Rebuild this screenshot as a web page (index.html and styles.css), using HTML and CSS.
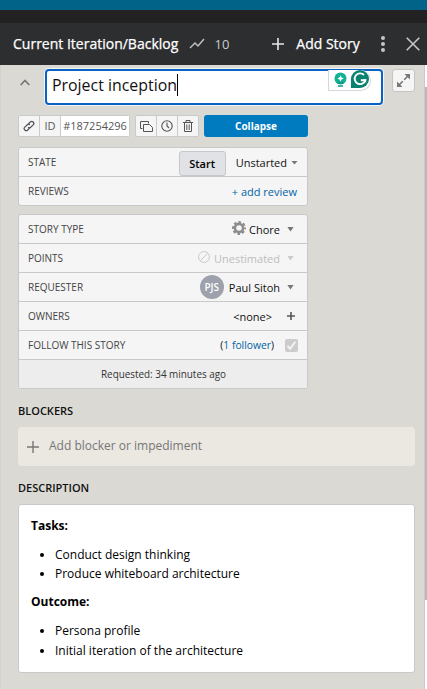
FILE: index.html
```html
<!DOCTYPE html>
<html lang="en">
<head>
<meta charset="utf-8">
<title>Current Iteration/Backlog</title>
<link rel="stylesheet" href="styles.css">
</head>
<body>
<div class="app">
  <div class="topbar"></div>
  <div class="strip"></div>
  <header class="panel-header">
    <h1>Current Iteration/Backlog</h1>
    <svg class="trend" width="16" height="12" viewBox="0 0 16 12"><path d="M1 10 6 5l3 3 6-7" fill="none" stroke="#c4c4c4" stroke-width="1.4"/></svg>
    <span class="count">10</span>
    <button class="add"><svg width="12" height="12" viewBox="0 0 12 12"><path d="M6 0v12M0 6h12" stroke="#e8e8e8" stroke-width="1.6"/></svg><span>Add Story</span></button>
    <svg class="dots" width="6" height="18" viewBox="0 0 6 18"><g fill="#c6c6c6"><circle cx="3" cy="3" r="2"/><circle cx="3" cy="9" r="2"/><circle cx="3" cy="15" r="2"/></g></svg>
    <svg class="close" width="14" height="14" viewBox="0 0 14 14"><path d="m.7.7 12.6 12.6M13.3.7.7 13.3" stroke="#c6c6c6" stroke-width="1.6"/></svg>
  </header>
  <main class="body">
    <section class="story">
      <div class="title-row">
        <svg class="chev" width="10" height="7" viewBox="0 0 10 7"><path d="m.7 6 4.3-4.5L9.300 6" fill="none" stroke="#777" stroke-width="1.7"/></svg>
        <div class="title-input"><span>Project inception</span><i class="caret"></i>
          <div class="assist">
            <svg width="13" height="16" viewBox="0 0 13 16"><circle cx="6.500" cy="6.500" r="6" fill="#12b195"/><path d="M3.500 10h6v2h-6zM4 13.200h5v1.600H4z" fill="#0a9c83"/><path d="M6.500 3.200 7.500 5.500l2.300 1-2.300 1-1 2.300-1-2.300-2.300-1 2.300-1z" fill="#fff"/></svg>
            <svg width="18" height="18" viewBox="0 0 18 18"><path d="M0 18V9a9 9 0 1 1 9 9z" fill="#0a8270"/><path d="M13 5A5.400 5.400 0 1 0 14.300 10.200H9.800" fill="none" stroke="#fff" stroke-width="1.900"/><path d="M11.800 9.300h3.300v3.500z" fill="#fff"/></svg>
          </div>
        </div>
        <button class="expand"><svg width="13" height="13" viewBox="0 0 13 13"><path d="M7.500 0H13v5.500zM0 7.500V13h5.500z" fill="#777"/><path d="m11 2-3.800 3.800M5.800 7.200 2 11" stroke="#777" stroke-width="1.600"/></svg></button>
      </div>
      <div class="actions">
        <div class="group">
          <span class="cell link"><svg width="12" height="12" viewBox="0 0 12 12" fill="none" stroke="#555" stroke-width="1.200"><path d="M4.500 4.800 7.300 2a2 2 0 0 1 2.900 2.900L7.700 7.300a2 2 0 0 1-2.600 0"/><path d="M7.500 7.200 4.700 10a2 2 0 0 1-2.900-2.900l2.500-2.400a2 2 0 0 1 2.600 0"/></svg></span>
          <span class="cell id">ID</span>
          <span class="cell num">#187254296</span>
        </div>
        <div class="group icons">
          <span class="cell"><svg width="13" height="11" viewBox="0 0 13 11" fill="none" stroke="#555" stroke-width="1"><path d="M2.500 7.500h-2v-7h8v2"/><path d="M3.500 3.500h6l3 3v4h-9z"/></svg></span>
          <span class="cell"><svg width="12" height="12" viewBox="0 0 12 12" fill="none" stroke="#555" stroke-width="1.100"><circle cx="6" cy="6" r="5.200"/><path d="M6 2.500V6l2 2"/></svg></span>
          <span class="cell"><svg width="10" height="12" viewBox="0 0 10 12" fill="none" stroke="#555" stroke-width="1"><path d="M0 2.500h10M3 2V.5h4V2M1.500 2.500v9h7v-9M3.800 4.500v5.500M6.200 4.500v5.500"/></svg></span>
        </div>
        <button class="collapse">Collapse</button>
      </div>
      <div class="card state">
        <div class="row"><span class="label">STATE</span><button class="start">Start</button><span class="value">Unstarted</span><i class="tri small"></i></div>
        <div class="row"><span class="label">REVIEWS</span><a class="review">+ add review</a></div>
      </div>
      <div class="card">
        <div class="row"><span class="label">STORY TYPE</span><svg class="gear" width="14" height="14" viewBox="-7 -7 14 14"><circle r="4.100" fill="none" stroke="#8c8c8c" stroke-width="2.600"/><circle r="6" fill="none" stroke="#8c8c8c" stroke-width="2" stroke-dasharray="2.700 2.012" stroke-dashoffset="1.350"/></svg><span class="value">Chore</span><i class="tri"></i></div>
        <div class="row muted"><span class="label">POINTS</span><svg class="none" width="12" height="12" viewBox="0 0 12 12" fill="none" stroke="#c9c9c9"><circle cx="6" cy="6" r="5.400"/><path d="m2.300 9.700 7.400-7.400"/></svg><span class="value">Unestimated</span><i class="tri"></i></div>
        <div class="row"><span class="label">REQUESTER</span><span class="avatar">PJS</span><span class="value">Paul Sitoh</span><i class="tri"></i></div>
        <div class="row"><span class="label">OWNERS</span><span class="value owner">&lt;none&gt;</span><svg class="plus" width="8" height="8" viewBox="0 0 8 8"><path d="M4 0v8M0 4h8" stroke="#555" stroke-width="1.600"/></svg></div>
        <div class="row"><span class="label">FOLLOW THIS STORY</span><span class="follow">(<a>1 follower</a>)</span><span class="check"><svg width="13" height="13" viewBox="0 0 13 13"><path d="m2.500 7 2.600 2.700 5.200-7" fill="none" stroke="#f5f5f5" stroke-width="1.900"/></svg></span></div>
        <div class="row requested">Requested: 34 minutes ago</div>
      </div>
      <h2 class="blockers-title">BLOCKERS</h2>
      <div class="blocker"><svg width="12" height="12" viewBox="0 0 12 12"><path d="M6 0v12M0 6h12" stroke="#777" stroke-width="1.400"/></svg><span>Add blocker or impediment</span></div>
      <h2 class="desc-title">DESCRIPTION</h2>
      <div class="description">
        <p>Tasks:</p>
        <ul><li>Conduct design thinking</li><li>Produce whiteboard architecture</li></ul>
        <p>Outcome:</p>
        <ul class="last"><li>Persona profile</li><li>Initial iteration of the architecture</li></ul>
      </div>
    </section>
    <div class="scrollbar"><div class="thumb"></div></div>
  </main>
</div>
</body>
</html>
```
FILE: styles.css
```css
* { box-sizing: border-box; }
body { margin: 0; font-family: "Open Sans", "Noto Sans", sans-serif; font-size: 12px; color: #111; }
button { font: inherit; margin: 0; padding: 0; border: 0; }
svg { display: block; flex: none; }
.app { width: 427px; height: 689px; overflow: hidden; display: flex; flex-direction: column; background: #dad9d4; }
.topbar { height: 10px; background: #006387; flex: none; }
.strip { height: 13px; background: #222; flex: none; }
.panel-header { height: 42px; flex: none; background: #2d2e30; display: flex; align-items: center; padding: 0 7px 0 13px; color: #fff; white-space: nowrap; }
.panel-header h1 { margin: 0 0 1px; width: 177px; font-size: 14px; font-weight: 400; -webkit-text-stroke: .25px #fff; }
.count { margin: 0 0 1px 9px; width: 58px; font-size: 13px; color: #ccc; }
.add { display: flex; align-items: center; gap: 12px; width: 108px; background: none; color: #fff; font-size: 14px; -webkit-text-stroke: .25px #fff; }
.add span { margin-bottom: 1px; }
.close { margin-left: 20px; }
.body { flex: 1; min-height: 0; display: flex; }
.story { width: 425px; flex: none; padding: 4px 8px 0 17px; border-left: 1px solid #d3d2cd; border-right: 1px solid #c9c9c5; }
.scrollbar { flex: 1; background: #fff; padding-top: 22px; }
.thumb { height: 513px; background: #b9b9b9; }
.title-row { display: flex; align-items: flex-start; height: 36px; }
.chev { margin: 10px 15px 0 2px; }
.title-input { position: relative; width: 338px; height: 36px; border: 2px solid #0863c5; border-radius: 4px; background: #fff; box-shadow: 0 0 0 1px #f4f4f1; display: flex; align-items: center; padding: 0 0 4px 5px; font-size: 15.900px; }
.caret { width: 1px; height: 22px; background: #000; }
.assist { position: absolute; right: 10px; top: -1px; width: 43px; height: 21px; display: flex; align-items: flex-start; gap: 4px; padding: 1px 0 0 5px; background: #fff; border: 1px solid #d5d7df; border-top: 0; border-radius: 0 11px 11px 0; }
.assist svg:first-child { margin-top: 1px; }
.assist svg:last-child { margin-top: -1px; }
.expand { width: 23px; height: 23px; margin-left: 9px; border: 1px solid #c4c4c4; border-radius: 3px; background: #f5f5f5; display: grid; place-items: center; }
.actions { display: flex; height: 22px; margin-top: 10px; }
.group { display: flex; height: 22px; border: 1px solid #c9caca; border-radius: 2px; background: #f5f5f5; color: #555; width: 112px; }
.cell { display: grid; place-items: center; width: 21px; border-right: 1px solid #c9caca; flex: none; }
.cell:last-child { border-right: 0; flex: 1; }
.cell.num { background: #fff; font-size: 11px; padding-bottom: 1px; }
.cell.id { font-size: 11px; padding-bottom: 1px; }
.icons { width: 64px; margin-left: 5px; }
.collapse { width: 104px; height: 22px; margin-left: 5px; padding-bottom: 1px; border-radius: 3px; background: #007bbf; color: #fff; font-size: 10px; font-weight: 700; }
.card { width: 290px; margin-top: 8px; border: 1px solid #c8c9ca; border-radius: 3px; background: #f5f5f5; overflow: hidden; }
.card.state { margin-top: 10px; }
.row { height: 29px; display: flex; align-items: center; padding: 0 8px 0 9px; border-bottom: 1px solid #c8c9ca; white-space: nowrap; }
.row:last-child { border-bottom: 0; height: 28px; }
.label { margin-right: auto; font-size: 10px; color: #444; }
.value { font-size: 11px; }
.tri { width: 7px; height: 5px; margin: 0 5px 0 7px; background: #777; clip-path: polygon(0 0, 100% 0, 50% 100%); }
.tri.small { width: 7px; height: 4px; margin: 1px 1px 0 4px; }
.start { width: 47px; height: 25px; margin: 2px 10px 0 0; border: 1px solid #c6c8cc; border-radius: 3px; background: #e0e2e6; font-weight: 600; font-size: 11px; }
a { color: #0063a6; }
.review { margin-right: 2px; font-size: 11px; }
.gear { margin: -2px 3px 0 0; }
.none { margin: -2px 4px 0 0; }
.muted .value { color: #bdbdbd; }
.muted .tri { background: #ccc; }
.avatar { width: 24px; height: 24px; margin-right: 5px; border-radius: 50%; background: #9ca1ab; color: #fff; font-size: 10px; font-weight: 600; display: grid; place-items: center; }
.owner { margin-right: 15px; }
.plus { margin-right: 4px; }
.follow { margin-right: 11px; font-size: 10.300px; }
.check { width: 13px; height: 13px; margin-right: 1px; background: #ccc; border-radius: 2px; }
.requested { justify-content: center; background: #ededed; color: #333; font-size: 9.900px; }
h2 { margin: 0; font-size: 11px; line-height: 16px; font-weight: 600; }
.blockers-title { margin-top: 14px; }
.blocker { width: 397px; height: 39px; margin-top: 8px; padding: 0 9px; display: flex; align-items: center; gap: 10px; border-radius: 4px; background: #eae8e1; color: #777; font-size: 12px; }
.blocker span { margin-top: -2px; }
.desc-title { margin-top: 14px; }
.description { width: 397px; height: 169px; margin-top: 8px; padding: 11px 12px; border: 1px solid #c8c9ca; border-radius: 3px; background: #fff; font-size: 12px; line-height: 19px; color: #000; }
.description p { margin: 0; font-weight: 700; }
.description ul { margin: 10px 0 9px; padding-left: 24px; }
.description .last li:last-child { margin-top: 1px; }
```
